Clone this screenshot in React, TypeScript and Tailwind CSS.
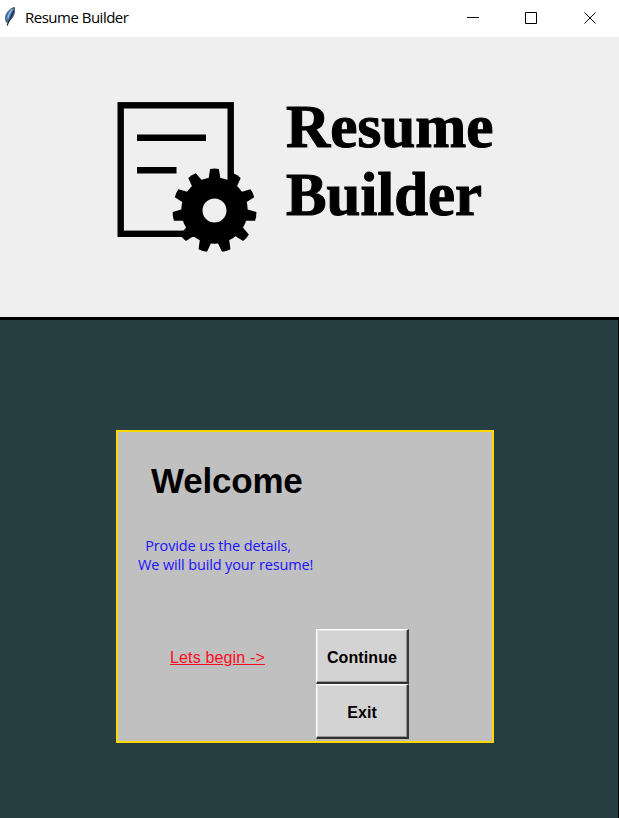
const teeth = Array.from({ length: 11 }, (_, i) => (i * 360) / 11);

function Feather() {
  return (
    <svg className="block" width="13" height="22" viewBox="0 0 13 22">
      <path d="M10.500 1.500C7 2 3 5.500 1.800 10c-.5 3 0 5 .9 6.500 3.500-1.500 6.300-5 7.300-8.500.5-2.500.8-4.500.5-6.500z" fill="#3f78b4" stroke="#55585e" strokeWidth="1" />
      <path d="M8.500 3.500C6 5.500 4.500 9 3.800 12.500" stroke="#8ebdf0" strokeWidth="1.500" fill="none" />
      <path d="M9.800 4.500C8.500 10 5.500 12 3.200 19.500" stroke="#1b2430" strokeWidth="1.200" fill="none" />
    </svg>
  );
}

function Logo() {
  return (
    <svg className="block" width="619" height="280" viewBox="0 37 619 280">
      <rect x="120.700" y="105.300" width="110" height="128.500" fill="none" stroke="#000" strokeWidth="6.400" />
      <path d="M137 137.700H206M137 170.300H176.500" stroke="#000" strokeWidth="6.600" />
      <g transform="translate(214.500 210.500)">
        <path fillRule="evenodd" d="M0-33.300A33.300 33.300 0 1 1 0 33.300 33.300 33.300 0 1 1 0-33.300ZM0-12A12 12 0 1 0 0 12 12 12 0 1 0 0-12Z" />
        {teeth.map((a) => (
          <path key={a} transform={`rotate(${a})`} d="M-6-31L-4.400-41.600Q0-42.600 4.400-41.600L6-31Z" />
        ))}
      </g>
      <g fontFamily="Liberation Serif, serif" fontWeight="700" fontSize="61" stroke="#000" strokeWidth="1.100">
        <text x="286" y="147" textLength="207.500" lengthAdjust="spacingAndGlyphs">Resume</text>
        <text x="286" y="215" textLength="196" lengthAdjust="spacingAndGlyphs">Builder</text>
      </g>
    </svg>
  );
}

function TkButton({ label }: { label: string }) {
  return (
    <button className="block h-[55px] w-[93px] border-t border-l border-r-2 border-b-2 border-t-white border-l-white border-r-[#3a3a3a] border-b-[#303030] bg-[#d3d3d3] pt-1 font-['Liberation_Sans',sans-serif] text-[16px] font-bold tracking-[0.1px] text-black shadow-[inset_-1px_-1px_0_#969696,inset_1px_1px_0_#e6e6e6]">
      {label}
    </button>
  );
}

export default function App() {
  return (
    <div className="flex h-[818px] w-[619px] flex-col overflow-hidden bg-[#efefef]">
      <header className="flex h-[37px] shrink-0 items-start bg-white pt-[6px] pl-[4px]">
        <Feather />
        <h1 className="ml-2 flex-1 font-['Open_Sans',sans-serif] text-[15px] leading-[23px] tracking-[-0.5px] text-black">Resume Builder</h1>
        <svg className="block" width="152" height="24" viewBox="467 6 152 24" fill="none" stroke="#000">
          <path d="M467 17.500H479M525.500 12.500H536.500V23.500H525.500ZM584.500 12.500L595.500 23.500M595.500 12.500L584.500 23.500" />
        </svg>
      </header>
      <section className="h-[280px] shrink-0">
        <Logo />
      </section>
      <main className="flex-1 border-t-[3px] border-r border-black bg-[#263d42] pt-[110px] pl-[116px]">
        <div className="h-[313px] w-[378px] border-2 border-[#ffd700] bg-[#c0c0c0]">
          <h2 className="pt-[27px] pl-[33px] font-['Liberation_Sans',sans-serif] text-[35px] leading-[44px] font-bold tracking-[-0.2px] text-black">Welcome</h2>
          <p className="mt-[33px] ml-[20px] w-[180px] font-['Open_Sans',sans-serif] text-[14.5px] leading-[19px] tracking-[-0.14px] whitespace-pre text-[#1b0fff]">{"  Provide us the details,\nWe will build your resume!"}</p>
          <div className="mt-[55px] flex">
            <a className="mt-[19px] ml-[52px] w-[146px] font-['Liberation_Sans',sans-serif] text-[16px] leading-[20px] tracking-[0.15px] text-[#ff0a1e] underline">Lets begin -&gt;</a>
            <div>
              <TkButton label="Continue" />
              <TkButton label="Exit" />
            </div>
          </div>
        </div>
      </main>
    </div>
  );
}
